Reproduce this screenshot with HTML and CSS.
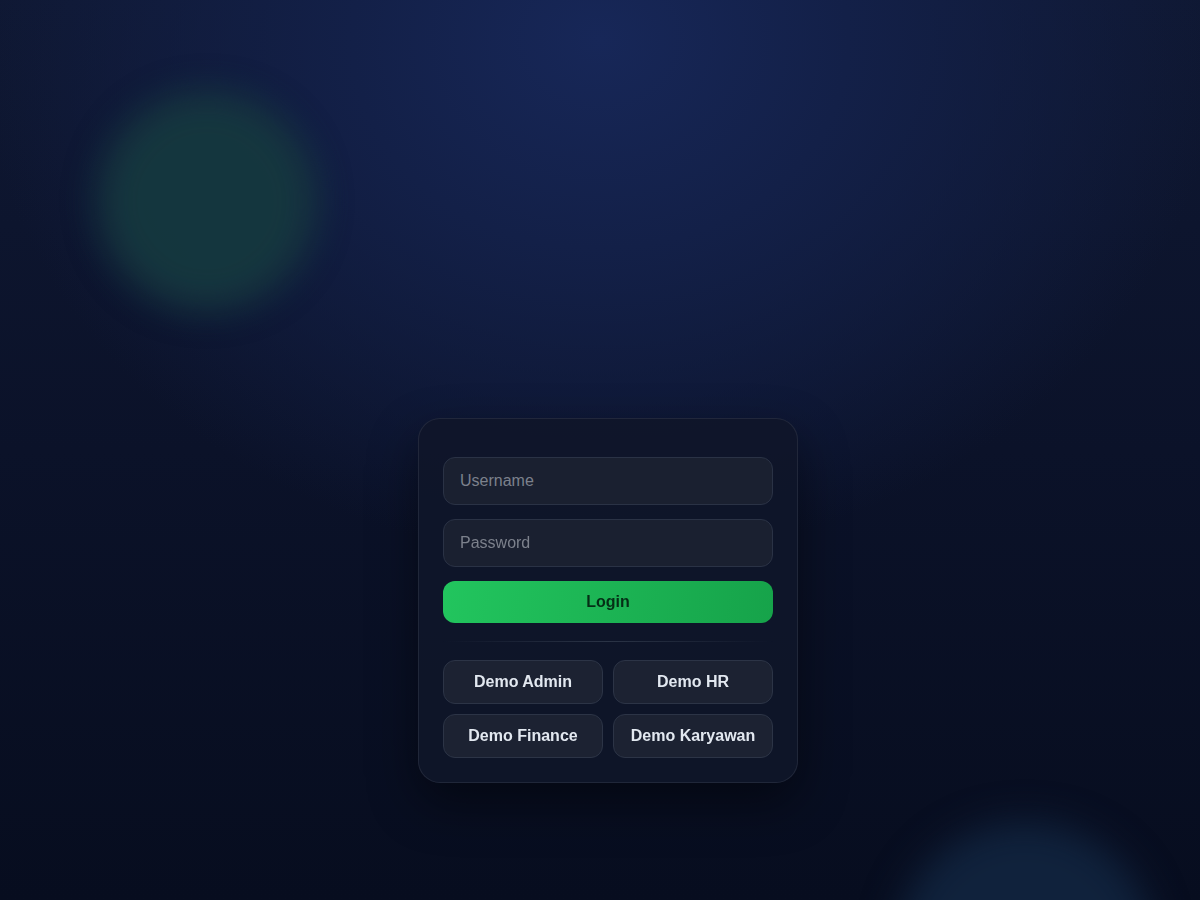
FILE: index.html
```html
<!DOCTYPE html>
<html lang="id">
<head>
<meta charset="utf-8">
<title>Login</title>
<link rel="stylesheet" href="styles.css">
</head>
<body>
<div class="backdrop">
  <div class="blob blob-green"></div>
  <div class="blob blob-blue"></div>
</div>
<main class="page">
  <form class="card">
    <input class="field" type="text" placeholder="Username">
    <input class="field" type="password" placeholder="Password">
    <button class="login" type="button">Login</button>
    <div class="divider"></div>
    <div class="demo-grid">
      <button class="demo" type="button">Demo Admin</button>
      <button class="demo" type="button">Demo HR</button>
      <button class="demo" type="button">Demo Finance</button>
      <button class="demo" type="button">Demo Karyawan</button>
    </div>
  </form>
</main>
</body>
</html>
```

FILE: styles.css
```css
* { box-sizing: border-box; }
html, body { height: 100%; overflow: hidden; }
body {
  margin: 0;
  font-family: "Liberation Sans", Arial, sans-serif;
  background:
    radial-gradient(ellipse 620px 520px at 600px 40px, #172758 0%, #132048 40%, rgba(12,20,44,0) 100%),
    linear-gradient(180deg, #0f1833 0%, #0b1229 50%, #070d1f 100%);
  background-color: #0a1126;
  position: relative;
}
.backdrop {
  position: fixed;
  inset: 0;
  overflow: hidden;
  pointer-events: none;
}
.blob {
  position: absolute;
  border-radius: 50%;
  filter: blur(18px);
}
.blob-green {
  left: 98px; top: 92px;
  width: 218px; height: 218px;
  background: #16383f;
  opacity: 0.95;
}
.blob-blue {
  left: 895px; top: 822px;
  width: 260px; height: 260px;
  background: #10223c;
}
.page {
  position: relative;
  display: flex;
  justify-content: center;
  padding: 418px 0 0 16px;
}
.card {
  width: 380px;
  padding: 38px 24px 24px;
  border-radius: 22px;
  background: rgba(15, 22, 41, 0.92);
  border: 1px solid rgba(255, 255, 255, 0.08);
  box-shadow: 0 20px 50px rgba(0, 0, 0, 0.45);
  display: flex;
  flex-direction: column;
}
.field {
  height: 48px;
  width: 100%;
  border-radius: 12px;
  border: 1px solid #2a3245;
  background: #1a2030;
  color: #e2e8f0;
  font-family: inherit;
  font-size: 16px;
  padding: 0 16px;
  margin-bottom: 14px;
  outline: none;
}
.field::placeholder { color: #7c818c; }
.login {
  height: 42px;
  border: 0;
  border-radius: 12px;
  background: linear-gradient(100deg, #22c55e 0%, #16a34a 100%);
  color: #052e16;
  font-family: inherit;
  font-weight: 700;
  font-size: 16px;
}
.divider {
  height: 1px;
  margin: 18px 0 18px;
  background: linear-gradient(90deg, rgba(51,65,85,0) 0%, #2b3446 50%, rgba(51,65,85,0) 100%);
}
.demo-grid {
  display: grid;
  grid-template-columns: 1fr 1fr;
  gap: 10px;
}
.demo {
  height: 44px;
  border-radius: 12px;
  border: 1px solid #2c3446;
  background: #1c2232;
  color: #e2e8f0;
  font-family: inherit;
  font-weight: 700;
  font-size: 16px;
}
```
